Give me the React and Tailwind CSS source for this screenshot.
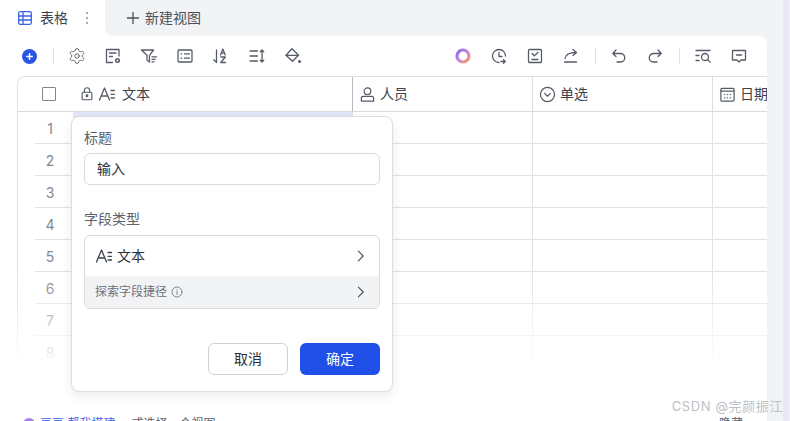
import { Settings } from 'lucide-react';

function Icon({ children, size = 18, className = 'text-[#565c67]' }) {
  return (
    <svg width={size} height={size} viewBox="0 0 18 18" fill="none" stroke="currentColor" strokeWidth="1.300" strokeLinecap="round" strokeLinejoin="round" className={`shrink-0 ${className}`}>
      {children}
    </svg>
  );
}

function TextFieldIcon({ className }) {
  return (
    <Icon size={18} className={className}>
      <path d="M1.500 15 6.500 3 11.500 15M3.300 11h6.400" />
      <path d="M13 5.500h3.500M13 9.300h3.500M13 13h3.500" />
    </Icon>
  );
}

function ToolButton({ children }) {
  return <div className="flex h-9 w-9 items-center justify-center">{children}</div>;
}

function Divider() {
  return (
    <div className="flex w-3 justify-center">
      <div className="h-4 w-px bg-[#e0e2e6]" />
    </div>
  );
}

function Chevron() {
  return (
    <Icon size={16} className="text-[#4e5561]">
      <path d="m6 3.500 5.500 5.500-5.500 5.500" />
    </Icon>
  );
}

function Toolbar() {
  return (
    <div className="flex h-10 items-center pl-[11px] pr-[10px]">
      <ToolButton>
        <svg width="15" height="15" viewBox="0 0 15 15">
          <circle cx="7.500" cy="7.500" r="7.500" fill="#2a55e5" />
          <path d="M7.500 4.800v5.400M4.800 7.500h5.400" stroke="#fff" strokeWidth="1.500" strokeLinecap="round" />
        </svg>
      </ToolButton>
      <Divider />
      <ToolButton>
        <Settings size={18} strokeWidth={1.200} className="text-[#565c67]" />
      </ToolButton>
      <ToolButton>
        <Icon>
          <path d="M8.500 15.500H2.500v-13h12.500v6.500" />
          <path d="M5.500 6h6.500M5.500 9.500h3" />
          <circle cx="13.500" cy="13.500" r="1.700" strokeWidth="1.600" />
        </Icon>
      </ToolButton>
      <ToolButton>
        <Icon>
          <path d="M1.500 3h12L9.500 8.300v6.700L7 13.300v-5z" />
          <path d="M12 9.800h4.500M12 12.300h3.200M12 14.800h2" />
        </Icon>
      </ToolButton>
      <ToolButton>
        <Icon>
          <rect x="2" y="3" width="14" height="12" rx="1" />
          <path d="M5 6.800h.6M5 11.200h.6M8.500 6.800h5M8.500 11.200h5" />
        </Icon>
      </ToolButton>
      <ToolButton>
        <Icon>
          <path d="M4.500 3v12.500M1.800 12.800 4.500 15.500" />
          <path d="M8.500 8 10.800 2 13.200 8M9.300 6.200h3M8.800 10h4.500l-4.500 5.500h4.800" />
        </Icon>
      </ToolButton>
      <ToolButton>
        <Icon>
          <path d="M2 4h7.500M2 9h7.500M2 14h7.500" />
          <path d="M14 3v12M12.300 4.700 14 3l1.700 1.700M12.300 13.300 14 15l1.700-1.700" />
        </Icon>
      </ToolButton>
      <ToolButton>
        <Icon>
          <path d="M8 1.800 14.500 8.300l-6 6-6.500-6z" />
          <path d="M2 8.300h12.500" />
          <circle cx="15.500" cy="14.500" r="1.500" fill="currentColor" stroke="none" />
        </Icon>
      </ToolButton>

      <div className="flex-1" />

      <ToolButton>
        <svg width="16" height="16" viewBox="0 0 16 16">
          <defs>
            <linearGradient id="ring" x1="0" y1="0" x2="1" y2="1">
              <stop offset="0" stopColor="#8a63f2" />
              <stop offset="0.5" stopColor="#c58ad8" />
              <stop offset="1" stopColor="#ff9a5c" />
            </linearGradient>
          </defs>
          <circle cx="8" cy="8" r="6" fill="none" stroke="url(#ring)" strokeWidth="3.200" />
        </svg>
      </ToolButton>
      <ToolButton>
        <Icon>
          <path d="M9 15.500A6.500 6.500 0 1 1 15.500 9" />
          <path d="M9 5.500V9.500h3M11 14.500h4M13.500 12.800l1.800 1.700-1.800 1.700" />
        </Icon>
      </ToolButton>
      <ToolButton>
        <Icon>
          <rect x="2.500" y="2.500" width="13" height="13" rx="1" />
          <path d="M6 6.500 8.300 8.800 12 5.500M6 12.500h6" />
        </Icon>
      </ToolButton>
      <ToolButton>
        <Icon>
          <path d="M3 11.500c.5-3.500 4-6 11-6M11 2.500l3.500 3-3.500 3M2.500 15h12" />
        </Icon>
      </ToolButton>
      <Divider />
      <ToolButton>
        <Icon>
          <path d="M3 6.500h7.500a4 4 0 0 1 0 8.500H7M6 3 2.800 6.500 6 9.500" />
        </Icon>
      </ToolButton>
      <ToolButton>
        <Icon>
          <path d="M15 6.500H7.500a4 4 0 0 0 0 8.500H11M12 3l3.200 3.500L12 9.500" />
        </Icon>
      </ToolButton>
      <Divider />
      <ToolButton>
        <Icon>
          <path d="M2 3.500h14M2 8.500h3M2 13.500h3" />
          <circle cx="11" cy="10" r="3.500" />
          <path d="m13.500 12.500 2.500 2.500" />
        </Icon>
      </ToolButton>
      <ToolButton>
        <Icon>
          <path d="M2.500 3.500h13v9.500h-4.500L9 15l-2-2H2.500z" />
          <path d="M6.500 8h5" />
        </Icon>
      </ToolButton>
    </div>
  );
}

function HeaderCell({ width, icon, label }) {
  return (
    <div className={`flex h-full shrink-0 items-center gap-[4px] overflow-hidden border-l pl-[6px] text-sm text-[#3c424d] ${width}`}>
      {icon}
      <span className="whitespace-nowrap">{label}</span>
    </div>
  );
}

function Row({ n }) {
  return (
    <div className="flex h-8 pl-[17px]">
      <div className="flex w-[318px] border-b border-[#e0e2e6]">
        <div className="w-[30px] pt-[8px] text-center text-sm leading-[18px] text-[#84888f]">{n}</div>
      </div>
      <div className="w-[180px] shrink-0 border-b border-l border-[#e0e2e6]" />
      <div className="w-[180px] shrink-0 border-b border-l border-[#e0e2e6]" />
      <div className="w-[55px] shrink-0 border-b border-l border-[#e0e2e6]" />
    </div>
  );
}

function Table() {
  return (
    <div className="relative ml-[17px] overflow-hidden rounded-tl-lg">
      <div className="relative rounded-tl-lg border-l border-t border-[#dcdee2]">
        <div className="flex h-[35px] items-center border-b border-[#d8dade]">
          <div className="flex w-[61px] shrink-0 justify-center pl-[1px]">
            <div className="h-[14px] w-[14px] rounded-[1px] border-[1.500px] border-[#7f8590]" />
          </div>
          <div className="flex h-full w-[273px] shrink-0 items-center gap-[3px] text-sm text-[#3c424d]">
            <Icon size={16}>
              <rect x="3.500" y="7" width="11" height="8.500" rx="1.200" />
              <path d="M6 7V5a3 3 0 0 1 6 0v2" />
              <circle cx="9" cy="11" r="1" fill="currentColor" />
            </Icon>
            <TextFieldIcon />
            <span className="ml-[3px] whitespace-nowrap">文本</span>
          </div>
          <HeaderCell
            width="w-[180px] border-[#b8bbc1]"
            icon={
              <Icon size={17}>
                <circle cx="9" cy="5.500" r="3.500" />
                <path d="M2.500 16v-3a2 2 0 0 1 2-2h9a2 2 0 0 1 2 2v3z" />
              </Icon>
            }
            label="人员"
          />
          <HeaderCell
            width="w-[180px] border-[#dcdee2]"
            icon={
              <Icon size={17}>
                <circle cx="9" cy="9" r="7.500" />
                <path d="m6 7.800 3 3 3-3" />
              </Icon>
            }
            label="单选"
          />
          <HeaderCell
            width="w-[55px] border-[#dcdee2]"
            icon={
              <Icon size={17}>
                <rect x="2" y="2.500" width="14" height="13.500" rx="1.200" />
                <path d="M2 5.500h14M5.800 9h.4M8.800 9h.4M11.800 9h.4M5.800 12.500h.4M8.800 12.500h.4M11.800 12.500h.4" />
              </Icon>
            }
            label="日期"
          />
        </div>
        {[1, 2, 3, 4, 5, 6, 7, 8].map((n) => (
          <Row key={n} n={n} />
        ))}
        <div className="absolute left-[55px] top-[35px] h-[6px] w-[279px] bg-[#e1e6f8]" />
      </div>
      {/* table fades out at the bottom */}
      <div className="absolute inset-x-0 bottom-0 h-[96px] bg-gradient-to-b from-white/0 to-white" />
    </div>
  );
}

function FieldPopup() {
  return (
    <div className="absolute left-[71px] top-[116px] flex h-[276px] w-[322px] flex-col rounded-lg border border-[#dcdee2] bg-white px-3 pt-[12px] shadow-[0_4px_12px_rgba(0,0,0,0.08)]">
      <div className="text-sm leading-[18px] text-[#5c626c]">标题</div>
      <div className="mt-[6px] flex h-8 items-center rounded-md border border-[#d8dade] pl-[12px] text-sm text-[#2b2f36]">输入</div>
      <div className="mt-[25px] text-sm leading-[18px] text-[#5c626c]">字段类型</div>
      <div className="mt-[7px] h-[74px] overflow-hidden rounded-md border border-[#d8dade]">
        <div className="flex h-[40px] items-center justify-between pl-[10px] pr-[10px]">
          <div className="flex items-center gap-[4px] text-sm text-[#2b2f36]">
            <TextFieldIcon className="text-[#3c424d]" />
            <span>文本</span>
          </div>
          <Chevron />
        </div>
        <div className="flex h-[32px] items-center justify-between bg-[#f2f3f5] pl-[10px] pr-[10px]">
          <div className="flex items-center gap-[4px] text-xs text-[#6b717b]">
            <span>探索字段捷径</span>
            <Icon size={12} className="text-[#80868f]">
              <circle cx="9" cy="9" r="7.500" strokeWidth="1.500" />
              <path d="M9 8v4.500M9 5.200v.3" strokeWidth="1.500" />
            </Icon>
          </div>
          <Chevron />
        </div>
      </div>
      <div className="mt-[34px] flex justify-end gap-3">
        <button type="button" className="h-8 w-20 rounded-md border border-[#d0d2d6] bg-white text-sm text-[#2b2f36]">取消</button>
        <button type="button" className="h-8 w-20 rounded-md bg-[#2150e8] text-sm text-white">确定</button>
      </div>
    </div>
  );
}

export default function App() {
  return (
    <div className="relative flex h-[421px] w-[790px] overflow-hidden bg-white font-['Inter','Noto_Sans_CJK_SC',sans-serif]">
      <div className="flex w-[767px] flex-col bg-[#f2f3f5]">
        <div className="flex h-9 shrink-0 bg-white">
          <div className="flex w-[105px] shrink-0 items-center pl-[18px] text-sm text-[#3c424d]">
            <svg width="14" height="14" viewBox="0 0 14 14" fill="none" stroke="#3a62e8" strokeWidth="1.300" className="shrink-0">
              <rect x="0.700" y="0.700" width="12.600" height="12.600" rx="1.500" />
              <path d="M.7 5h12.600M.7 9h12.600M5 .7v12.600" />
            </svg>
            <span className="ml-[8px]">表格</span>
            <span className="ml-[18px] flex flex-col gap-[3px]">
              <i className="block h-[2px] w-[2px] rounded-full bg-[#8a9099]" />
              <i className="block h-[2px] w-[2px] rounded-full bg-[#8a9099]" />
              <i className="block h-[2px] w-[2px] rounded-full bg-[#8a9099]" />
            </span>
          </div>
          <div className="flex flex-1 items-center rounded-bl-lg bg-[#f2f3f5] pl-[22px] text-sm text-[#4a505a]">
            <svg width="12" height="12" viewBox="0 0 12 12" stroke="#4a505a" strokeWidth="1.300" className="mr-[6px]">
              <path d="M6 0v12M0 6h12" />
            </svg>
            新建视图
          </div>
        </div>
        <div className="flex-1 overflow-hidden rounded-tr-lg bg-white">
          <Toolbar />
          <Table />
          <div className="mt-[49px] flex justify-between pl-[23px] pr-[24px] text-xs leading-[14px]">
            <div className="flex items-center">
              <span className="h-3 w-3 rounded-full bg-[#a87cf0]" />
              <span className="ml-[5px] text-[#3a62e8]">豆豆 帮我搭建</span>
              <span className="ml-[16px] text-[#5c626c]">或选择一个视图</span>
            </div>
            <span className="text-[#5c626c]">隐藏</span>
          </div>
        </div>
      </div>
      <div className="w-4 bg-[#f2f3f5]" />
      <div className="w-[6px] bg-[#e6e9f5]" />
      <div className="w-px bg-[#f4f4f6]" />
      <FieldPopup />
      <div className="absolute bottom-[5px] right-[7px] text-[13px] tracking-[0.6px] text-[#bdbfc3]">CSDN @完颜振江</div>
    </div>
  );
}
